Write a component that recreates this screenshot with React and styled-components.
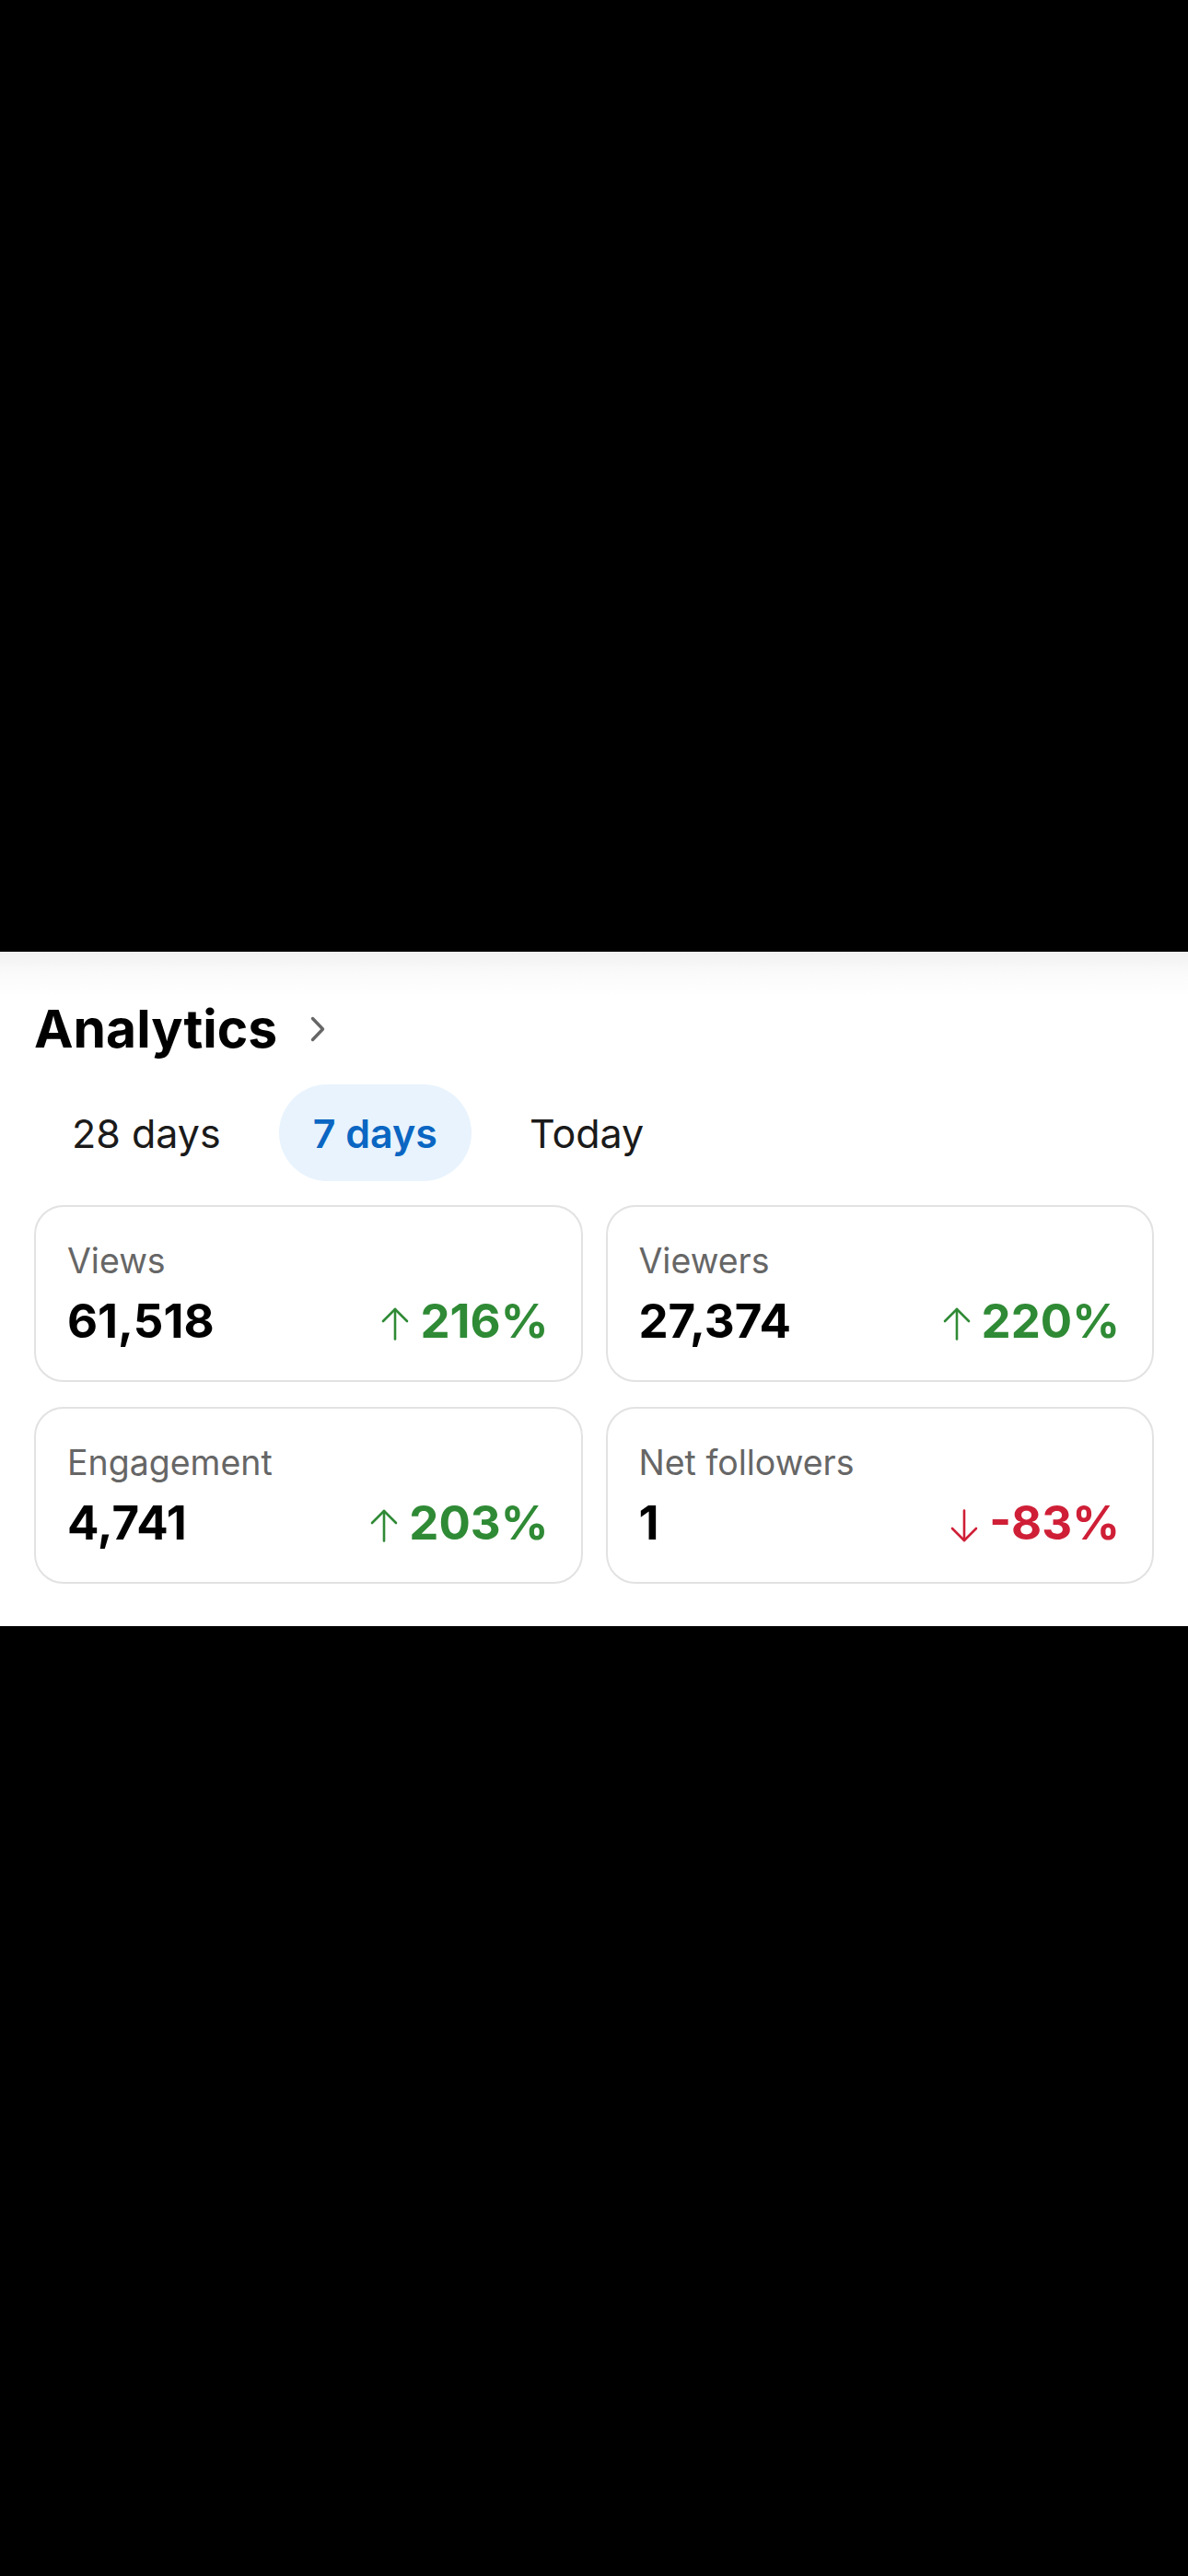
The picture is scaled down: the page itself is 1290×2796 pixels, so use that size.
import React from 'react';
import styled, { createGlobalStyle } from 'styled-components';

const GlobalStyle = createGlobalStyle`
  html, body {
    margin: 0;
    padding: 0;
    background: #000;
  }
  body {
    font-family: Inter, "Noto Sans", "Liberation Sans", sans-serif;
    -webkit-font-smoothing: antialiased;
  }
`;

const Page = styled.div`
  min-height: 2796px;
  padding-top: 1033px;
  box-sizing: border-box;
  background: #000;
`;

const Panel = styled.section`
  background: linear-gradient(to bottom, #f1f1f1 0px, #fafafa 22px, #fff 48px);
  padding: 56px 37px 46px;
`;

const Header = styled.div`
  display: flex;
  align-items: center;
  gap: 36px;
`;

const Title = styled.h2`
  margin: 0;
  font-size: 57px;
  line-height: 56px;
  font-weight: 700;
  color: #000;
`;

const Chevron = styled.svg`
  display: block;
  width: 16px;
  height: 28px;
  color: #666;
`;

const Tabs = styled.div`
  display: flex;
  gap: 26px;
  margin: 32px 0 0 4px;
`;

const Tab = styled.div`
  display: flex;
  align-items: center;
  height: 105px;
  padding: 0 37px;
  border-radius: 999px;
  font-size: 43px;
  font-weight: ${p => (p.$active ? 600 : 400)};
  color: ${p => (p.$active ? '#0a66c2' : '#1a1a1a')};
  background: ${p => (p.$active ? '#e8f3fd' : 'transparent')};
`;

const Grid = styled.div`
  display: grid;
  grid-template-columns: 1fr 1fr;
  column-gap: 25px;
  row-gap: 27px;
  margin-top: 26px;
`;

const Card = styled.div`
  height: 192px;
  box-sizing: border-box;
  border: 2px solid #e2e2e2;
  border-radius: 32px;
  padding: 37px 35px 0 34px;
`;

const Label = styled.div`
  font-size: 37.5px;
  line-height: 44px;
  color: #666;
`;

const ValueRow = styled.div`
  display: flex;
  justify-content: space-between;
  align-items: baseline;
  margin-top: 15px;
`;

const Value = styled.div`
  font-size: 51px;
  line-height: 56px;
  font-weight: 700;
  color: #000;
`;

const Change = styled.div`
  display: flex;
  align-items: baseline;
  gap: 12px;
  font-size: 51px;
  line-height: 56px;
  font-weight: 700;
  color: ${p => (p.$down ? '#cf1f37' : '#2f8a35')};
`;

const Arrow = styled.svg`
  width: 30px;
  height: 36px;
  display: block;
  align-self: flex-end;
  margin-bottom: 7px;
`;

function TrendArrow({ down }) {
  return (
    <Arrow viewBox="0 0 30 36" fill="none" stroke="currentColor" strokeWidth="2.6" strokeLinecap="round" strokeLinejoin="round">
      {down ? (
        <>
          <path d="M15 1.5V34" />
          <path d="M2 21L15 34L28 21" />
        </>
      ) : (
        <>
          <path d="M15 2V34.5" />
          <path d="M2 15L15 2L28 15" />
        </>
      )}
    </Arrow>
  );
}

const stats = [
  { label: 'Views', value: '61,518', change: '216%' },
  { label: 'Viewers', value: '27,374', change: '220%' },
  { label: 'Engagement', value: '4,741', change: '203%' },
  { label: 'Net followers', value: '1', change: '-83%', down: true },
];

const tabs = ['28 days', '7 days', 'Today'];

export default function App() {
  return (
    <Page>
      <GlobalStyle />
      <Panel>
        <Header>
          <Title>Analytics</Title>
          <Chevron viewBox="0 0 16 28" fill="none" stroke="currentColor" strokeWidth="3.4" strokeLinecap="round" strokeLinejoin="round">
            <path d="M2.5 2.5L13.5 14L2.5 25.5" />
          </Chevron>
        </Header>
        <Tabs>
          {tabs.map(t => (
            <Tab key={t} $active={t === '7 days'}>
              {t}
            </Tab>
          ))}
        </Tabs>
        <Grid>
          {stats.map(s => (
            <Card key={s.label}>
              <Label>{s.label}</Label>
              <ValueRow>
                <Value>{s.value}</Value>
                <Change $down={s.down}>
                  <TrendArrow down={s.down} />
                  {s.change}
                </Change>
              </ValueRow>
            </Card>
          ))}
        </Grid>
      </Panel>
    </Page>
  );
}
